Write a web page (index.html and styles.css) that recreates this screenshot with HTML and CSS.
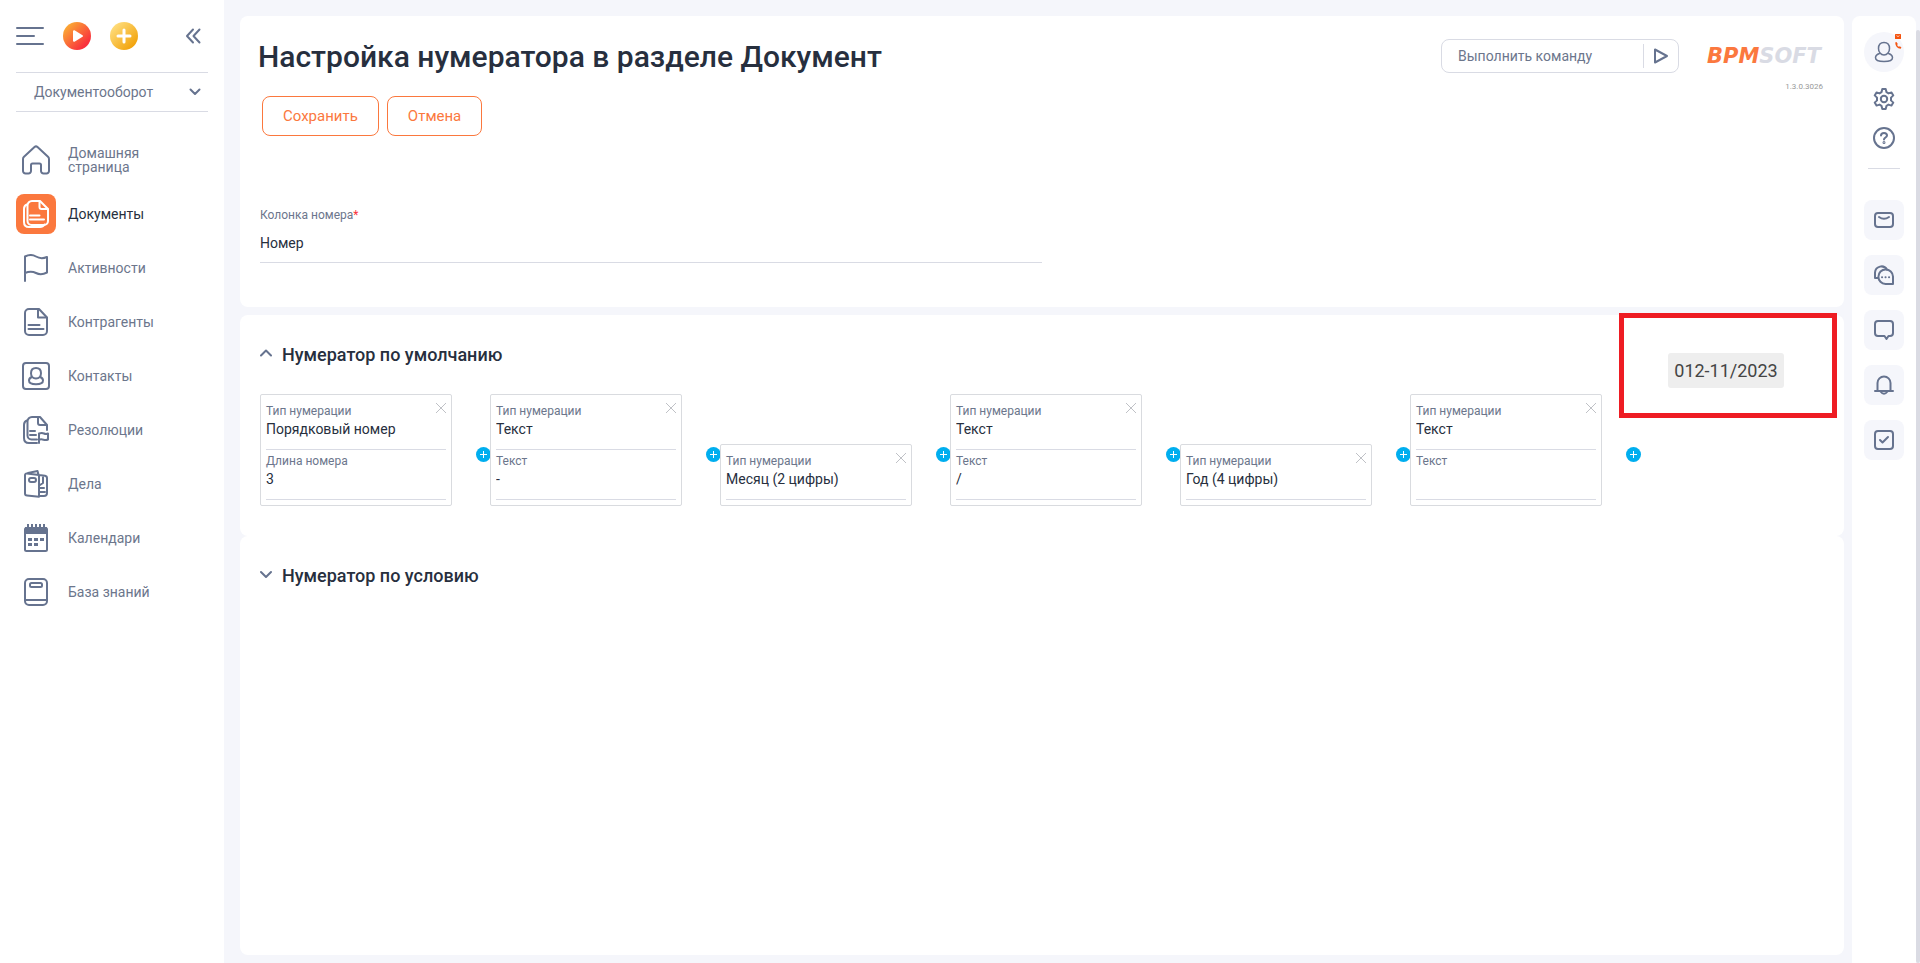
FILE: index.html
```html
<!DOCTYPE html>
<html lang="ru">
<head>
<meta charset="utf-8">
<title>Настройка нумератора</title>
<meta name="viewport" content="width=device-width, initial-scale=1">
<link rel="stylesheet" href="styles.css">
</head>
<body>
<div class="app">
  <aside class="sidebar">
    <div class="toolbar">
      <button class="icon-btn" type="button" aria-label="Меню">
        <svg width="28" height="20" viewBox="0 0 28 20" class="line"><path d="M1 2h26M1 10h17M1 18h26"/></svg>
      </button>
      <button class="icon-btn" type="button" aria-label="Запустить процесс">
        <svg width="28" height="28" viewBox="0 0 28 28">
          <defs><linearGradient id="run" x1="0" y1="0" x2="1" y2="1"><stop offset="0.1" stop-color="#fbb034"/><stop offset="0.8" stop-color="#f9313c"/></linearGradient></defs>
          <circle cx="14" cy="14" r="14" fill="url(#run)"/>
          <path d="M11 9.200v9.600l8-4.800z" fill="#fff" stroke="#fff" stroke-width="2" stroke-linejoin="round"/>
        </svg>
      </button>
      <button class="icon-btn" type="button" aria-label="Добавить">
        <svg width="28" height="28" viewBox="0 0 28 28">
          <defs><linearGradient id="add" x1="0" y1="0" x2="1" y2="1"><stop offset="0.1" stop-color="#ffdf80"/><stop offset="0.85" stop-color="#f2a30c"/></linearGradient></defs>
          <circle cx="14" cy="14" r="14" fill="url(#add)"/>
          <path d="M14 8v12M8 14h12" stroke="#fff" stroke-width="3" stroke-linecap="round"/>
        </svg>
      </button>
      <button class="icon-btn collapse" type="button" aria-label="Свернуть панель">
        <svg width="16" height="16" viewBox="0 0 16 16" class="line"><path d="M8 1.500 2 8l6 6.500M14.500 1.500 8.500 8l6 6.500"/></svg>
      </button>
    </div>
    <button class="workplace" type="button">
      <span>Документооборот</span>
      <svg width="12" height="8" viewBox="0 0 12 8" class="line"><path d="m1.500 1.500 4.500 4.500 4.500-4.500"/></svg>
    </button>
    <nav class="nav">
      <a class="nav-item" href="#home"><span class="nav-icon"><svg width="28" height="30" viewBox="0 0 28 30" class="line"><path d="M1 14a3 3 0 0 1 1-2.200L12.500 2a2.300 2.300 0 0 1 3 0L26 11.800a3 3 0 0 1 1 2.200v12a2.500 2.500 0 0 1-2.500 2.500h-3A2.500 2.500 0 0 1 19 26v-6a1.500 1.500 0 0 0-1.500-1.500h-7A1.500 1.500 0 0 0 9 20v6a2.500 2.500 0 0 1-2.500 2.500h-3A2.500 2.500 0 0 1 1 26z"/></svg></span><span>Домашняя<br>страница</span></a>
      <a class="nav-item active" href="#documents"><span class="nav-icon"><svg width="26" height="28" viewBox="0 0 26 28" class="line"><path d="M4 4.500Q1 5.500 1 9v13q0 5 5 5h11q3 0 4.500-2.500"/><path d="M9 1h8l8 8v12a4 4 0 0 1-4 4H8.500a4 4 0 0 1-4-4V5.500A4.500 4.500 0 0 1 9 1z"/><path d="M16.500 1.500V7q0 2 2 2h6M7 15.500h9.500M7 19.500h14"/></svg></span><span>Документы</span></a>
      <a class="nav-item" href="#activities"><span class="nav-icon"><svg width="24" height="28" viewBox="0 0 24 28" class="line"><path d="M1 27V2.500q6-3 11 0t11 .5v15.500q-6 3-11 .5t-11 0"/></svg></span><span>Активности</span></a>
      <a class="nav-item" href="#accounts"><span class="nav-icon"><svg width="24" height="28" viewBox="0 0 24 28" class="line"><path d="M5 1h10l8 8.500V23a4 4 0 0 1-4 4H5a4 4 0 0 1-4-4V5a4 4 0 0 1 4-4z"/><path d="M14 1.500v8h8.500M4.500 17h11M4.500 21h15"/></svg></span><span>Контрагенты</span></a>
      <a class="nav-item" href="#contacts"><span class="nav-icon"><svg width="28" height="28" viewBox="0 0 28 28" class="line"><rect x="1" y="1" width="26" height="26" rx="3"/><path d="M14 6c3.200 0 5 2.300 5 5.300s-2 5.200-5 5.200-5-2.200-5-5.200S10.800 6 14 6zM9.800 15C8 15.800 7 17 7 18.500 7 21 9.500 22.300 14 22.300s7-1.300 7-3.800c0-1.500-1-2.700-2.800-3.500"/></svg></span><span>Контакты</span></a>
      <a class="nav-item" href="#resolutions"><span class="nav-icon"><svg width="26" height="28" viewBox="0 0 26 28" class="line"><path d="M4 4.500Q1 5.500 1 9v13q0 5 5 5h8"/><path d="M14 23.500H8.500a4 4 0 0 1-4-4v-14A4.500 4.500 0 0 1 9 1h8l7 8v5M15 1.500V7q0 2 2 2h6M7 15h5M7 19h6M16 27V17.500q3-1 5 0t4 0v6q-2 1-4.500.2t-4.500 0"/></svg></span><span>Резолюции</span></a>
      <a class="nav-item" href="#cases"><span class="nav-icon"><svg width="24" height="28" viewBox="0 0 24 28" class="line"><path d="M3 3.500 15 5v21.800L3 25.500a2 2 0 0 1-2-2V5a1.600 1.600 0 0 1 2-1.500zM4 3l9.500-2 1 3.500M15 5l6 .8a2.500 2.500 0 0 1 2 2.500V23a3 3 0 0 1-3 3h-5M19 6v7l-3 2M16 18h4M16 22h5"/><rect x="5" y="8" width="7" height="4" rx="2"/></svg></span><span>Дела</span></a>
      <a class="nav-item" href="#calendars"><span class="nav-icon"><svg width="24" height="28" viewBox="0 0 24 28" class="line"><rect x="1" y="4" width="22" height="23" rx="1.500"/><path class="solid" d="M1 3h22v7H1z"/><path d="M4 0v3M8 0v3M12 0v3M16 0v3M20 0v3" stroke-linecap="butt"/><path stroke-width="3" stroke-linecap="butt" d="M4 15.500h4M10 15.500h4M16 15.500h4M4 20.500h4M10 20.500h4"/></svg></span><span>Календари</span></a>
      <a class="nav-item" href="#knowledge"><span class="nav-icon"><svg width="24" height="28" viewBox="0 0 24 28" class="line"><rect x="1" y="1" width="22" height="26" rx="4"/><rect x="6" y="5" width="12" height="4" rx="1.500"/><path d="M1 22h22"/></svg></span><span>База знаний</span></a>
    </nav>
  </aside>

  <main class="main">
    <section class="panel settings">
      <header class="page-head">
        <div class="head-main">
          <h1>Настройка нумератора в разделе Документ</h1>
          <div class="actions">
            <button class="btn" type="button">Сохранить</button>
            <button class="btn" type="button">Отмена</button>
          </div>
        </div>
        <form class="command">
          <input type="text" placeholder="Выполнить команду" aria-label="Выполнить команду">
          <button type="button" aria-label="Выполнить">
            <svg width="14" height="16" viewBox="0 0 14 16" class="line"><path d="M1 1.500v13L13 8z"/></svg>
          </button>
        </form>
        <div class="brand">
          <div class="logo"><span>BPM</span>SOFT</div>
          <div class="version">1.3.0.3026</div>
        </div>
      </header>
      <div class="column-field">
        <label for="number-column">Колонка номера<span class="required">*</span></label>
        <input id="number-column" type="text" value="Номер">
      </div>
    </section>

    <section class="panel numerator">
      <h2><button class="toggle" type="button" aria-expanded="true"><svg width="12" height="12" viewBox="0 0 12 12" class="line"><path d="M1 6.500 6 1.500l5 5"/></svg>Нумератор по умолчанию</button></h2>
      <div class="steps">
        <div class="step">
          <div class="card">
            <div class="field"><label for="t1">Тип нумерации</label><select id="t1"><option>Порядковый номер</option></select></div>
            <div class="field"><label for="v1">Длина номера</label><input id="v1" type="text" value="3"></div>
            <button class="close" type="button" aria-label="Удалить"><svg width="12" height="12" viewBox="0 0 12 12"><path d="m1 1 10 10M11 1 1 11"/></svg></button>
          </div>
          <button class="plus" type="button" aria-label="Добавить"><svg width="15" height="15" viewBox="0 0 15 15"><circle cx="7.500" cy="7.500" r="7.500"/><path d="M7.500 4v7M4 7.500h7"/></svg></button>
        </div>
        <div class="step">
          <div class="card">
            <div class="field"><label for="t2">Тип нумерации</label><select id="t2"><option>Текст</option></select></div>
            <div class="field"><label for="v2">Текст</label><input id="v2" type="text" value="-"></div>
            <button class="close" type="button" aria-label="Удалить"><svg width="12" height="12" viewBox="0 0 12 12"><path d="m1 1 10 10M11 1 1 11"/></svg></button>
          </div>
          <button class="plus" type="button" aria-label="Добавить"><svg width="15" height="15" viewBox="0 0 15 15"><circle cx="7.500" cy="7.500" r="7.500"/><path d="M7.500 4v7M4 7.500h7"/></svg></button>
        </div>
        <div class="step">
          <div class="card">
            <div class="field"><label for="t3">Тип нумерации</label><select id="t3"><option>Месяц (2 цифры)</option></select></div>
            <button class="close" type="button" aria-label="Удалить"><svg width="12" height="12" viewBox="0 0 12 12"><path d="m1 1 10 10M11 1 1 11"/></svg></button>
          </div>
          <button class="plus" type="button" aria-label="Добавить"><svg width="15" height="15" viewBox="0 0 15 15"><circle cx="7.500" cy="7.500" r="7.500"/><path d="M7.500 4v7M4 7.500h7"/></svg></button>
        </div>
        <div class="step">
          <div class="card">
            <div class="field"><label for="t4">Тип нумерации</label><select id="t4"><option>Текст</option></select></div>
            <div class="field"><label for="v4">Текст</label><input id="v4" type="text" value="/"></div>
            <button class="close" type="button" aria-label="Удалить"><svg width="12" height="12" viewBox="0 0 12 12"><path d="m1 1 10 10M11 1 1 11"/></svg></button>
          </div>
          <button class="plus" type="button" aria-label="Добавить"><svg width="15" height="15" viewBox="0 0 15 15"><circle cx="7.500" cy="7.500" r="7.500"/><path d="M7.500 4v7M4 7.500h7"/></svg></button>
        </div>
        <div class="step">
          <div class="card">
            <div class="field"><label for="t5">Тип нумерации</label><select id="t5"><option>Год (4 цифры)</option></select></div>
            <button class="close" type="button" aria-label="Удалить"><svg width="12" height="12" viewBox="0 0 12 12"><path d="m1 1 10 10M11 1 1 11"/></svg></button>
          </div>
          <button class="plus" type="button" aria-label="Добавить"><svg width="15" height="15" viewBox="0 0 15 15"><circle cx="7.500" cy="7.500" r="7.500"/><path d="M7.500 4v7M4 7.500h7"/></svg></button>
        </div>
        <div class="step">
          <div class="card">
            <div class="field"><label for="t6">Тип нумерации</label><select id="t6"><option>Текст</option></select></div>
            <div class="field"><label for="v6">Текст</label><input id="v6" type="text" value=""></div>
            <button class="close" type="button" aria-label="Удалить"><svg width="12" height="12" viewBox="0 0 12 12"><path d="m1 1 10 10M11 1 1 11"/></svg></button>
          </div>
          <button class="plus" type="button" aria-label="Добавить"><svg width="15" height="15" viewBox="0 0 15 15"><circle cx="7.500" cy="7.500" r="7.500"/><path d="M7.500 4v7M4 7.500h7"/></svg></button>
        </div>
      </div>
      <div class="highlight"><output class="preview">012-11/2023</output></div>
    </section>

    <section class="panel condition">
      <h2><button class="toggle" type="button" aria-expanded="false"><svg width="12" height="12" viewBox="0 0 12 12" class="line"><path d="m1 2 5 5 5-5"/></svg>Нумератор по условию</button></h2>
    </section>
  </main>

  <aside class="rail">
    <div class="utilities">
      <button class="avatar" type="button" aria-label="Профиль">
        <svg width="20" height="22" viewBox="0 0 20 22" class="line thin"><path d="M10 1.500c3.500 0 5.500 2.500 5.500 6s-2.200 6.500-5.500 6.500-5.500-3-5.500-6.500 2-6 5.500-6zM5.500 12.500C3 13.300 1.500 14.700 1.500 16.700c0 2.600 3 3.800 8.500 3.800s8.500-1.200 8.500-3.800c0-2-1.500-3.400-4-4.200"/></svg>
        <svg class="status" width="8" height="17" viewBox="0 0 8 17"><rect x="1" y="1" width="6" height="5" rx="0.500" fill="#f4530f"/><path d="m2.500 2.600 1.500 1 1.500-1" fill="none" stroke="#fff" stroke-width="0.700"/><path d="M1.200 9.500 2.500 9l1.300 2-.7.900q.8 1.400 1.900 1.900l.9-.6 1.500 1.200-.7 1.300Q1.500 15.500 1.200 9.500z" fill="#f4530f"/></svg>
      </button>
      <button class="icon-btn tool" type="button" aria-label="Настройки">
        <svg width="22" height="24" viewBox="0 0 22 24" class="line"><path d="M9.300 2h3.400l.8 3.200 2 1.200 3-1 1.800 3-2.300 2.200v2.800l2.300 2.200-1.800 3-3-1-2 1.200-.8 3.200H9.300l-.8-3.200-2-1.200-3 1-1.800-3L4 13.400v-2.800L1.700 8.400l1.800-3 3 1 2-1.200z"/><circle cx="11" cy="12" r="3.200"/></svg>
      </button>
      <button class="icon-btn tool" type="button" aria-label="Справка">
        <svg width="22" height="22" viewBox="0 0 22 22" class="line"><circle cx="11" cy="11" r="10"/><path d="M8 8.500C8 6.800 9.300 6 11 6s3 .9 3 2.500c0 2-3 2-3 4"/><circle cx="11" cy="15.500" r="0.500"/></svg>
      </button>
    </div>
    <div class="channels">
      <button class="channel" type="button" aria-label="Почта"><svg width="20" height="20" viewBox="0 0 20 20" class="line"><rect x="1" y="3" width="18" height="14" rx="3"/><path d="M5 7q5 3.500 10 0"/></svg></button>
      <button class="channel" type="button" aria-label="Чаты"><svg width="20" height="20" viewBox="0 0 20 20" class="line"><path d="M19 19h-7.500a7.300 7.300 0 1 1 7.500-7.500z"/><path d="M4 13H1V7.500a6.500 6.500 0 0 1 12-3"/><path d="M8 12.300h.1M11.500 12.300h.1M15 12.300h.1"/></svg></button>
      <button class="channel" type="button" aria-label="Сообщения"><svg width="20" height="20" viewBox="0 0 20 20" class="line"><path d="M4 1h12a3 3 0 0 1 3 3v9a3 3 0 0 1-3 3h-1.500L12.500 19l-2-3H4a3 3 0 0 1-3-3V4a3 3 0 0 1 3-3z"/></svg></button>
      <button class="channel" type="button" aria-label="Уведомления"><svg width="20" height="20" viewBox="0 0 20 20" class="line"><path d="M1 16h18M3.500 16V8a6.500 6.500 0 0 1 13 0v8M6.500 16.500q3.500 4.500 7 0"/></svg></button>
      <button class="channel" type="button" aria-label="Задачи"><svg width="20" height="20" viewBox="0 0 20 20" class="line"><rect x="1" y="1" width="18" height="18" rx="3"/><path d="m6 10 2.500 2.500L14 7"/></svg></button>
    </div>
  </aside>
  <div class="scrollbar"></div>
</div>
</body>
</html>
```
FILE: styles.css
```css
* {
  box-sizing: border-box;
}

body {
  margin: 0;
  background: #f5f6fb;
  color: #272f3e;
  font-family: Roboto, "Liberation Sans", sans-serif;
  font-size: 14px;
}

button,
input,
select {
  margin: 0;
  padding: 0;
  border: 0;
  background: none;
  color: inherit;
  font: inherit;
}

button {
  cursor: pointer;
}

svg {
  display: block;
  flex: none;
}

.line {
  fill: none;
  stroke: #66738f;
  stroke-width: 2;
  stroke-linecap: round;
  stroke-linejoin: round;
}

.thin {
  stroke-width: 1.5;
}

.solid {
  fill: #66738f;
  stroke: none;
}

.app {
  display: flex;
  min-height: 100vh;
}

/* Left navigation */
.sidebar {
  flex: none;
  width: 224px;
  padding: 22px 16px 0;
  background: #fff;
}

.toolbar {
  display: flex;
  align-items: center;
  gap: 19px;
  height: 28px;
}

.collapse {
  margin-left: auto;
  margin-right: 7px;
}

.workplace {
  display: flex;
  align-items: center;
  justify-content: space-between;
  width: 100%;
  height: 40px;
  margin-top: 22px;
  padding: 0 7px 0 18px;
  border-top: 1px solid #d9dbe4;
  border-bottom: 1px solid #d9dbe4;
  color: #6c768c;
}

.nav {
  display: flex;
  flex-direction: column;
  gap: 14px;
  margin-top: 28px;
}

.nav-item {
  display: flex;
  align-items: center;
  gap: 12px;
  color: #6c768c;
  line-height: 14px;
  text-decoration: none;
}

.nav-icon {
  display: flex;
  align-items: center;
  justify-content: center;
  width: 40px;
  height: 40px;
  border-radius: 8px;
}

.active {
  color: #272f3e;
}

.active .nav-icon {
  background: #fb783e;
}

.active .line {
  stroke: #fff;
}

/* Content */
.main {
  display: flex;
  flex: 1;
  flex-direction: column;
  min-width: 0;
  padding: 16px 8px 8px 16px;
}

.panel {
  position: relative;
  padding: 28px 20px 30px;
  border-radius: 8px;
  background: #fff;
}

.settings {
  margin-bottom: 8px;
  padding: 20px 20px 44px;
}

.condition {
  flex: 1;
}

.page-head {
  display: flex;
  align-items: flex-start;
  margin-right: -3px;
}

.head-main {
  flex: 1;
}

h1 {
  margin: 0;
  margin-left: -2px;
  font-size: 30px;
  font-weight: 500;
  line-height: 42px;
}

.actions {
  display: flex;
  gap: 8px;
  margin-top: 18px;
  padding-left: 2px;
}

.btn {
  height: 40px;
  padding: 0 20px;
  border: 1px solid #fb783e;
  border-radius: 8px;
  color: #fb783e;
  font-size: 15px;
}

.command {
  display: flex;
  align-items: center;
  width: 238px;
  height: 34px;
  margin-top: 3px;
  border: 1px solid #d9dbe4;
  border-radius: 8px;
}

.command input {
  flex: 1;
  min-width: 0;
  height: 32px;
  padding-left: 16px;
}

.command input::placeholder {
  color: #6c768c;
  opacity: 1;
}

.command button {
  display: flex;
  align-items: center;
  justify-content: center;
  width: 35px;
  height: 24px;
  border-left: 1px solid #d9dbe4;
}

.brand {
  width: 120px;
  margin-left: 28px;
}

.logo {
  color: #d9dbe4;
  font-family: "DejaVu Sans", sans-serif;
  font-size: 21px;
  font-style: italic;
  font-weight: 700;
  line-height: 40px;
}

.logo span {
  color: #fb783e;
}

.version {
  margin-top: 5px;
  padding-right: 4px;
  color: #999;
  font-size: 8px;
  line-height: 12px;
  text-align: right;
}

.column-field {
  width: 50%;
  margin-top: 71px;
}

.column-field label {
  display: block;
  color: #6c768c;
  font-size: 12px;
  line-height: 16px;
}

.required {
  color: #f9313c;
}

.column-field input {
  width: 100%;
  height: 40px;
  border-bottom: 1px solid #d9dbe4;
}

h2 {
  margin: 0;
  font-size: 18px;
  font-weight: 500;
  line-height: 24px;
}

.toggle {
  display: flex;
  align-items: center;
  gap: 10px;
}

.steps {
  display: flex;
  align-items: flex-end;
  margin-top: 27px;
}

.step {
  display: flex;
  align-items: flex-end;
}

.card {
  position: relative;
  width: 192px;
  padding: 5px;
  border: 1px solid #d9dbdf;
  border-radius: 2px;
  background: #fff;
}

.field {
  height: 50px;
  padding-top: 3px;
  border-bottom: 1px solid #d9dbe4;
}

.field label {
  display: block;
  color: #6c768c;
  font-size: 12px;
  line-height: 16px;
}

.field input,
.field select {
  display: block;
  width: 100%;
  height: 20px;
  appearance: none;
}

.close {
  position: absolute;
  top: 7px;
  right: 4px;
}

.close path {
  stroke: #bfc1c6;
}

.plus {
  width: 14px;
  margin: 0 0 44px 24px;
}

.plus circle {
  fill: #00aeef;
}

.plus path {
  stroke: #fff;
}

.highlight {
  position: absolute;
  top: -2px;
  right: 7px;
  display: flex;
  justify-content: center;
  width: 218px;
  height: 105px;
  padding: 35px 4px 0 0;
  border: 5px solid #ee1c23;
}

.preview {
  height: 35px;
  padding: 0 6px;
  border-radius: 3px;
  background: #eee;
  color: #444;
  font-size: 18px;
  line-height: 36px;
}

/* Communication rail */
.rail {
  flex: none;
  width: 64px;
  margin-top: 16px;
  padding: 16px 12px 0;
  border-radius: 8px 8px 0 0;
  background: #fff;
}

.utilities {
  display: flex;
  flex-direction: column;
  align-items: center;
  gap: 15px;
  margin: 0 4px;
  padding-bottom: 18px;
  border-bottom: 1px solid #d9dbe4;
}

.avatar {
  position: relative;
  display: flex;
  align-items: center;
  justify-content: center;
  width: 40px;
  height: 40px;
  border-radius: 50%;
  background: #f5f6fb;
}

.status {
  position: absolute;
  top: 1px;
  right: 2px;
}

.tool {
  display: flex;
  align-items: center;
  justify-content: center;
  width: 24px;
  height: 24px;
}

.channels {
  display: flex;
  flex-direction: column;
  gap: 15px;
  margin-top: 31px;
}

.channel {
  display: flex;
  align-items: center;
  justify-content: center;
  width: 40px;
  height: 40px;
  border-radius: 8px;
  background: #f5f6fb;
}

.scrollbar {
  flex: none;
  width: 4px;
  margin-top: 30px;
  border-radius: 2px;
  background: #dadbe3;
}
```
